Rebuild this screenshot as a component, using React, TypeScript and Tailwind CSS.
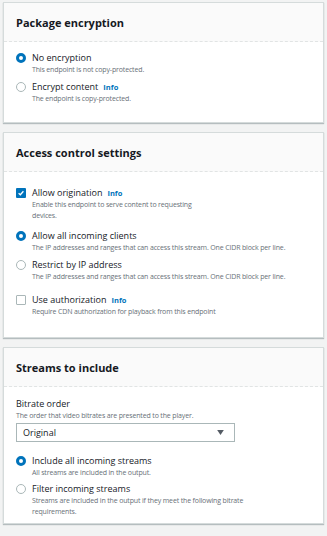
import React from 'react';

const font = { fontFamily: '"Open Sans", "Noto Sans", sans-serif' };

function Info() {
  return <span className="ml-[5px] text-[7.5px] font-bold text-[#0073bb]">Info</span>;
}

function Radio({ checked }: { checked?: boolean }) {
  return checked ? (
    <span className="mt-[1px] box-border h-[10px] w-[10px] shrink-0 rounded-full border-[3px] border-[#0073bb] bg-white" />
  ) : (
    <span className="mt-[1px] box-border h-[10px] w-[10px] shrink-0 rounded-full border border-[#aab7b8] bg-white" />
  );
}

function Check({ checked }: { checked?: boolean }) {
  return checked ? (
    <span className="mt-[1px] flex h-[10px] w-[10px] shrink-0 items-center justify-center rounded-[1px] bg-[#0073bb]">
      <svg viewBox="0 0 10 10" className="h-[8px] w-[8px]">
        <path d="M2 5.2 L4.2 7.2 L8 2.8" fill="none" stroke="white" strokeWidth="1.6" />
      </svg>
    </span>
  ) : (
    <span className="mt-[1px] box-border h-[10px] w-[10px] shrink-0 rounded-[1px] border border-[#aab7b8] bg-white" />
  );
}

function Option({
  control,
  label,
  info,
  desc,
}: {
  control: React.ReactNode;
  label: string;
  info?: boolean;
  desc: React.ReactNode;
}) {
  return (
    <div className="flex gap-[6px]">
      {control}
      <div>
        <div className="text-[9px] leading-[12px] text-[#16191f]">
          {label}
          {info && <Info />}
        </div>
        <div className="text-[7px] leading-[11px] tracking-[-0.15px] text-[#687078]">{desc}</div>
      </div>
    </div>
  );
}

function Card({ title, body, children }: { title: string; body: string; children: React.ReactNode }) {
  return (
    <section className="border border-[#d5dbdb] bg-white shadow-[0_1px_1px_rgba(0,28,36,0.25)]">
      <div className="border-b border-dashed border-[#e1e4e4] bg-[#fafafa] px-[12px] pb-[10px] pt-[12px]">
        <h2 className="text-[11px] font-bold leading-[16px] text-[#16191f]">{title}</h2>
      </div>
      <div className={body}>{children}</div>
    </section>
  );
}

export default function App() {
  return (
    <main className="min-h-[536px] bg-[#f2f3f3] px-[3px] pt-[2px]" style={font}>
      <div className="flex w-[321px] flex-col gap-[9px]">
        <Card title="Package encryption" body="px-[12px] pb-[18px] pt-[10px]">
          <div className="flex flex-col gap-[6px]">
            <Option control={<Radio checked />} label="No encryption" desc="This endpoint is not copy-protected." />
            <Option control={<Radio />} label="Encrypt content" info desc="The endpoint is copy-protected." />
          </div>
        </Card>

        <Card title="Access control settings" body="px-[12px] pb-[20px] pt-[15px]">
          <Option
            control={<Check checked />}
            label="Allow origination"
            info
            desc={
              <>
                Enable this endpoint to serve content to requesting
                <br />
                devices.
              </>
            }
          />
          <div className="mt-[9px] flex flex-col gap-[6px]">
            <Option
              control={<Radio checked />}
              label="Allow all incoming clients"
              desc="The IP addresses and ranges that can access this stream. One CIDR block per line."
            />
            <Option
              control={<Radio />}
              label="Restrict by IP address"
              desc="The IP addresses and ranges that can access this stream. One CIDR block per line."
            />
          </div>
          <div className="mt-[12px]">
            <Option
              control={<Check />}
              label="Use authorization"
              info
              desc="Require CDN authorization for playback from this endpoint"
            />
          </div>
        </Card>

        <Card title="Streams to include" body="px-[12px] pb-[6px] pt-[11px]">
          <div className="text-[9px] leading-[12px] text-[#16191f]">Bitrate order</div>
          <div className="text-[7px] leading-[11px] tracking-[-0.15px] text-[#687078]">
            The order that video bitrates are presented to the player.
          </div>
          <div className="mt-[2px] flex h-[19px] w-[219px] items-center justify-between border border-[#aab7b8] bg-white pl-[6px] pr-[10px] text-[9px] text-[#16191f]">
            <span>Original</span>
            <svg viewBox="0 0 8 6" className="h-[5px] w-[7px]">
              <path d="M0 0 H8 L4 6 Z" fill="#545b64" />
            </svg>
          </div>
          <div className="mt-[13px] flex flex-col gap-[5px]">
            <Option control={<Radio checked />} label="Include all incoming streams" desc="All streams are included in the output." />
            <Option
              control={<Radio />}
              label="Filter incoming streams"
              desc={
                <>
                  Streams are included in the output if they meet the following bitrate
                  <br />
                  requirements.
                </>
              }
            />
          </div>
        </Card>
      </div>
    </main>
  );
}
